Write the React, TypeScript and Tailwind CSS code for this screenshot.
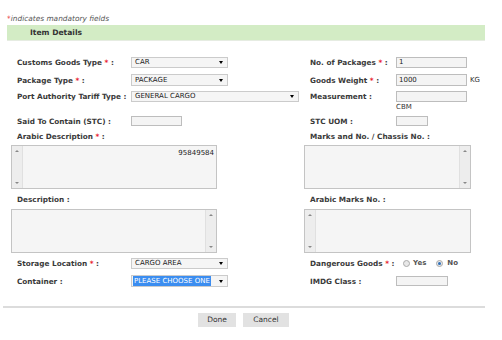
import React from 'react'

const label = "text-[7.3px] font-bold text-[#3a3a3a] leading-[9px] whitespace-nowrap"

function Star() {
  return <span className="text-[#e8202a]"> *</span>
}

function Arrow() {
  return <span className="w-0 h-0 border-l-[2.5px] border-r-[2.5px] border-t-[3px] border-l-transparent border-r-transparent border-t-black" />
}

function Select({ value, width, highlight }: { value: string; width: string; highlight?: boolean }) {
  return (
    <div className={`${width} h-full border border-[#cbcbcb] bg-[#f5f5f5] flex items-center justify-between pl-[1px] pr-[4px]`}>
      {highlight ? (
        <span className="bg-[#3b8df0] text-white text-[7px] leading-[10px] px-[1px]">{value}</span>
      ) : (
        <span className="text-[7px] leading-[9px] pl-[2px] text-[#222]">{value}</span>
      )}
      <Arrow />
    </div>
  )
}

function Input({ value, width }: { value?: string; width: string }) {
  return (
    <div className={`${width} h-full border border-[#bdbdbd] bg-[#f4f4f4] flex items-center pl-[2px] text-[7px] text-[#222]`}>
      {value}
    </div>
  )
}

function ScrollBar({ side }: { side: 'left' | 'right' }) {
  return (
    <div className={`w-[11px] h-full bg-[#ededed] flex flex-col items-center justify-between py-[4px] ${side === 'left' ? 'border-r border-[#e0e0e0]' : 'border-l border-[#e0e0e0]'}`}>
      <span className="w-0 h-0 border-l-[2px] border-r-[2px] border-b-[2px] border-l-transparent border-r-transparent border-b-[#888]" />
      <span className="w-0 h-0 border-l-[2px] border-r-[2px] border-t-[2px] border-l-transparent border-r-transparent border-t-[#888]" />
    </div>
  )
}

function TextArea({ width, bar, text }: { width: string; bar: 'left' | 'right'; text?: string }) {
  return (
    <div className={`${width} h-[44px] border border-[#c4c4c4] bg-[#f5f5f5] flex`}>
      {bar === 'left' && <ScrollBar side="left" />}
      <div className="flex-1 text-right pr-[2px] pt-[3px] text-[7px] leading-[9px] text-[#222]">{text}</div>
      {bar === 'right' && <ScrollBar side="right" />}
    </div>
  )
}

function Radio({ checked }: { checked?: boolean }) {
  return (
    <span className="w-[7px] h-[7px] rounded-full border border-[#aaa] bg-[#e8e8e8] flex items-center justify-center">
      {checked && <span className="w-[3px] h-[3px] rounded-full bg-[#2f6fb8]" />}
    </span>
  )
}

export default function App() {
  return (
    <div className="w-[502px] h-[340px] bg-white overflow-hidden font-['DejaVu_Sans',sans-serif] text-[#333]">
      <div className="pl-[7px] pt-[14px] h-[25px] text-[7.4px] italic leading-[9px] text-[#555]">
        <span className="text-[#e8202a] not-italic">*</span>indicates mandatory fields
      </div>
      <div className="ml-[7px] w-[478px] h-[16px] bg-[#d3ecc5] border-b border-[#e6ece2] pl-[23px] flex items-center text-[7.6px] font-bold text-[#333]">
        Item Details
      </div>

      {/* row 1 */}
      <div className="mt-[16px] h-[11px] flex">
        <div className="w-[304px] flex items-center">
          <span className={`${label} ml-[17px] w-[114px]`}>Customs Goods Type<Star /> :</span>
          <Select value="CAR" width="w-[97px]" />
        </div>
        <div className="flex items-center">
          <span className={`${label} ml-[6px] w-[86px]`}>No. of Packages<Star /> :</span>
          <Input value="1" width="w-[71px]" />
        </div>
      </div>

      {/* row 2 */}
      <div className="mt-[6px] h-[12px] flex">
        <div className="w-[304px] flex items-center">
          <span className={`${label} ml-[17px] w-[114px]`}>Package Type<Star /> :</span>
          <Select value="PACKAGE" width="w-[97px]" />
        </div>
        <div className="flex items-center">
          <span className={`${label} ml-[6px] w-[86px]`}>Goods Weight<Star /> :</span>
          <Input value="1000" width="w-[71px]" />
          <span className="ml-[3px] text-[7px] text-[#333]">KG</span>
        </div>
      </div>

      {/* row 3 */}
      <div className="mt-[5px] h-[11px] flex">
        <div className="w-[304px] flex items-center">
          <span className={`${label} ml-[17px] w-[114px]`}>Port Authority Tariff Type :</span>
          <Select value="GENERAL CARGO" width="w-[168px]" />
        </div>
        <div className="flex items-center">
          <span className={`${label} ml-[6px] w-[86px]`}>Measurement :</span>
          <Input width="w-[71px]" />
        </div>
      </div>
      <div className="h-[9px] flex items-center pl-[396px] text-[7px] text-[#333] mt-[1px]">CBM</div>

      {/* row 4 */}
      <div className="mt-[4px] h-[10px] flex">
        <div className="w-[304px] flex items-center">
          <span className={`${label} ml-[17px] w-[114px]`}>Said To Contain (STC) :</span>
          <Input width="w-[51px]" />
        </div>
        <div className="flex items-center">
          <span className={`${label} ml-[6px] w-[86px]`}>STC UOM :</span>
          <Input width="w-[32px]" />
        </div>
      </div>

      <div className="mt-[6px] h-[9px] flex items-center">
        <div className="w-[304px] flex items-center">
          <span className={`${label} ml-[17px]`}>Arabic Description<Star /> :</span>
        </div>
        <span className={`${label} ml-[6px]`}>Marks and No. / Chassis No. :</span>
      </div>
      <div className="mt-[4px] flex">
        <div className="w-[304px] pl-[11px]">
          <TextArea width="w-[206px]" bar="left" text="95849584" />
        </div>
        <TextArea width="w-[167px]" bar="right" />
      </div>

      <div className="mt-[6px] h-[9px] flex items-center">
        <div className="w-[304px] flex items-center">
          <span className={`${label} ml-[17px]`}>Description :</span>
        </div>
        <span className={`${label} ml-[6px]`}>Arabic Marks No. :</span>
      </div>
      <div className="mt-[5px] flex">
        <div className="w-[304px] pl-[11px]">
          <TextArea width="w-[206px]" bar="right" />
        </div>
        <TextArea width="w-[167px]" bar="left" />
      </div>

      {/* row 5 */}
      <div className="mt-[5px] h-[11px] flex">
        <div className="w-[304px] flex items-center">
          <span className={`${label} ml-[17px] w-[114px]`}>Storage Location<Star /> :</span>
          <Select value="CARGO AREA" width="w-[97px]" />
        </div>
        <div className="flex items-center">
          <span className={`${label} ml-[6px] w-[93px]`}>Dangerous Goods<Star /> :</span>
          <Radio />
          <span className="ml-[3px] mr-[10px] text-[7px] font-bold text-[#555]">Yes</span>
          <Radio checked />
          <span className="ml-[4px] text-[7px] font-bold text-[#555]">No</span>
        </div>
      </div>

      {/* row 6 */}
      <div className="mt-[6px] h-[12px] flex">
        <div className="w-[304px] flex items-center">
          <span className={`${label} ml-[17px] w-[114px]`}>Container :</span>
          <Select value="PLEASE CHOOSE ONE" width="w-[97px]" highlight />
        </div>
        <div className="flex items-center">
          <span className={`${label} ml-[6px] w-[86px]`}>IMDG Class :</span>
          <div className="h-[10px]">
            <Input width="w-[52px]" />
          </div>
        </div>
      </div>

      <div className="mt-[19px] ml-[3px] w-[482px] h-[2px] bg-[#dcdcdc]" />

      <div className="mt-[5px] flex gap-[7px] pl-[198px]">
        <button className="w-[38px] h-[14px] bg-[#e2e2e2] text-[7.5px] text-[#333] flex items-center justify-center">Done</button>
        <button className="w-[46px] h-[14px] bg-[#e2e2e2] text-[7.5px] text-[#333] flex items-center justify-center">Cancel</button>
      </div>
    </div>
  )
}
